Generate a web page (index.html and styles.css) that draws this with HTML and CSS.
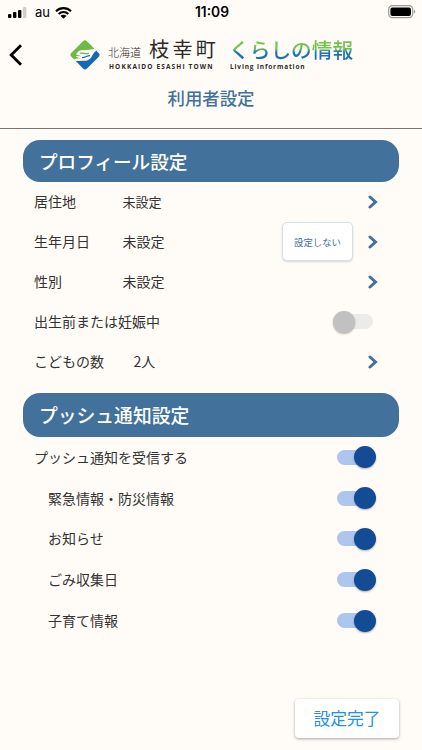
FILE: index.html
```html
<!DOCTYPE html>
<html lang="ja">
<head>
    <meta charset="UTF-8">
    <meta name="viewport" content="width=device-width, initial-scale=1.0">
    <title>利用者設定</title>
    <link rel="stylesheet" href="styles.css">
</head>
<body>
    <div class="status-bar">
        <div class="carrier">
            <svg width="19" height="11" viewBox="0 0 19 11">
                <rect x="0" y="7" width="3.4" height="4" rx="1"/>
                <rect x="5" y="5" width="3.4" height="6" rx="1"/>
                <rect x="10" y="3" width="3.4" height="8" rx="1"/>
                <rect x="15" y="0" width="3.4" height="11" rx="1" fill="#d0cecb"/>
            </svg>
            <span class="carrier-name">au</span>
            <svg width="17" height="13" viewBox="0 0 17 13">
                <path d="M1 5.2C5.2 1 11.8 1 16 5.2" fill="none" stroke="#000" stroke-width="2.2"/>
                <path d="M3.7 8C6.4 5.4 10.6 5.4 13.3 8" fill="none" stroke="#000" stroke-width="2.1"/>
                <path d="M8.5 12.7L5.5 9.7C7.2 8.3 9.8 8.3 11.5 9.7Z"/>
            </svg>
        </div>
        <div class="clock">11:09</div>
        <svg class="battery" width="28" height="14" viewBox="0 0 28 14">
            <rect x="0.7" y="0.7" width="24" height="12" rx="3.6" fill="none" stroke="#9b9997" stroke-width="1.2"/>
            <rect x="2.4" y="2.4" width="20.6" height="8.6" rx="2"/>
            <path d="M26 4.8C27.6 5.2 27.6 8.2 26 8.6Z" fill="#9b9997"/>
        </svg>
    </div>

    <header class="header">
        <svg class="back" width="14" height="22" viewBox="0 0 14 22">
            <path d="M12 1.2L2.2 11L12 20.8" fill="none" stroke="#000" stroke-width="2.8"/>
        </svg>
        <svg class="logo" width="30" height="30" viewBox="0 0 30 30">
            <path d="M13 1.2Q15 -0.6 17 1.2L25.5 9.7L14 16L5 20.3L1.2 16.5Q-0.4 15 1.2 13Z" fill="#6dbb45"/>
            <path d="M25.5 9.7L28.6 13Q30.6 15 28.6 17L17 28.6Q15 30.3 13 28.6L5 20.3L14 17Z" fill="#1769b5"/>
            <path d="M7 13C9.5 9.3 13 10.2 17 10C20 9.8 22 8.8 24.6 9L26.3 10.8C23.3 12.7 22.8 15.2 21.3 17.2C19.5 20 16.5 21 13 20.8C10 20.7 8 21.3 5.5 21L4 19.2C6.2 18.2 8.5 18.6 10.5 18.2L7.3 17.3C6 17 5.5 16.4 6.5 16.1L11.5 16.2L7 14.8C6 14.4 6 13.5 7 13Z" fill="#fffcf7"/>
            <path d="M10 13.2C13.5 12.5 15.5 14.2 19 13.3" fill="none" stroke="#6dbb45" stroke-width="1.3"/>
            <path d="M12 17.6C15 17.7 16.3 16 20 15.7" fill="none" stroke="#1769b5" stroke-width="1.3"/>
        </svg>
        <div class="town">
            <div class="town-name"><span class="pref">北海道</span><span class="city">枝幸町</span></div>
            <div class="town-en">HOKKAIDO ESASHI TOWN</div>
        </div>
        <div class="living">
            <div class="living-name">くらしの情報</div>
            <div class="living-en">Living information</div>
        </div>
    </header>

    <h1>利用者設定</h1>

    <main class="container">
        <h2>プロフィール設定</h2>
        <div class="profile">
            <div class="row">
                <span class="label">居住地</span>
                <span class="value small">未設定</span>
                <svg class="arrow" viewBox="0 0 10 14"><path d="M2 2L7.5 7L2 12"/></svg>
            </div>
            <div class="row">
                <span class="label">生年月日</span>
                <span class="value">未設定</span>
                <button class="unset">設定しない</button>
                <svg class="arrow" viewBox="0 0 10 14"><path d="M2 2L7.5 7L2 12"/></svg>
            </div>
            <div class="row">
                <span class="label">性別</span>
                <span class="value">未設定</span>
                <svg class="arrow" viewBox="0 0 10 14"><path d="M2 2L7.5 7L2 12"/></svg>
            </div>
            <div class="row">
                <span class="label wide">出生前または妊娠中</span>
                <span class="switch"></span>
            </div>
            <div class="row">
                <span class="label">こどもの数</span>
                <span class="value count">2人</span>
                <svg class="arrow" viewBox="0 0 10 14"><path d="M2 2L7.5 7L2 12"/></svg>
            </div>
        </div>

        <h2 class="push-title">プッシュ通知設定</h2>
        <div class="push">
            <div class="row">
                <span class="label wide">プッシュ通知を受信する</span>
                <span class="switch on"></span>
            </div>
            <div class="row sub">
                <span class="label wide">緊急情報・防災情報</span>
                <span class="switch on"></span>
            </div>
            <div class="row sub">
                <span class="label wide">お知らせ</span>
                <span class="switch on"></span>
            </div>
            <div class="row sub">
                <span class="label wide">ごみ収集日</span>
                <span class="switch on"></span>
            </div>
            <div class="row sub">
                <span class="label wide">子育て情報</span>
                <span class="switch on"></span>
            </div>
        </div>
    </main>

    <footer class="footer">
        <button class="done">設定完了</button>
    </footer>
</body>
</html>
```
FILE: styles.css
```css
* {
    box-sizing: border-box;
}

body {
    font-family: 'Noto Sans CJK JP', sans-serif;
    background-color: #fffcf7;
    color: #333;
    margin: 0;
    height: 750px;
    display: flex;
    flex-direction: column;
    overflow: hidden;
}

svg {
    display: block;
    flex-shrink: 0;
}

.status-bar {
    display: grid;
    grid-template-columns: 1fr auto 1fr;
    align-items: center;
    height: 24px;
    padding: 0 6px 0 8px;
    color: #000;
}

.carrier {
    display: flex;
    align-items: center;
}

.carrier-name {
    font: 13px/16px Inter, sans-serif;
    margin: 0 5px 0 8px;
}

.clock {
    font: 600 13.8px/24px Inter, sans-serif;
}

.battery {
    justify-self: end;
    margin-bottom: 1px;
}

.header {
    display: flex;
    align-items: flex-start;
    height: 59px;
    padding: 15px 0 0 9px;
}

.back {
    margin-top: 5px;
}

.logo {
    margin: 1px 0 0 47px;
}

.town {
    width: 107px;
    margin-left: 8px;
    color: #2d2928;
}

.town-name {
    display: flex;
    align-items: baseline;
    height: 24px;
    line-height: 20px;
    white-space: nowrap;
}

.pref {
    font-size: 11px;
    font-weight: 300;
    width: 41px;
}

.city {
    font-size: 20px;
    letter-spacing: 3.4px;
    width: 66px;
}

.town-en,
.living-en {
    font: bold 6.5px/8px 'Open Sans', sans-serif;
    white-space: nowrap;
}

.town-en {
    padding-left: 1px;
    letter-spacing: 1.15px;
}

.living {
    margin-left: 14px;
    color: #2d2928;
}

.living-name {
    height: 24px;
    font-size: 20.7px;
    font-weight: 500;
    line-height: 20px;
    color: transparent;
    background: linear-gradient(#72c34c 40%, #1b70bb 56%);
    background-clip: text;
    -webkit-background-clip: text;
}

.living-en {
    padding-left: 1px;
    letter-spacing: 0.85px;
}

h1 {
    height: 46px;
    margin: 0;
    border-bottom: 1px solid #777571;
    color: #42719c;
    font-size: 17.4px;
    font-weight: 500;
    line-height: 29px;
    text-align: center;
}

.container {
    padding: 10.5px 23px 0;
}

h2 {
    height: 42.5px;
    margin: 0;
    padding-left: 16px;
    border-radius: 17px;
    background-color: #42719c;
    color: #fff;
    font-size: 18.6px;
    font-weight: 500;
    line-height: 41px;
}

.push-title {
    height: 44px;
    font-size: 18.8px;
    line-height: 43px;
}

.profile {
    padding-bottom: 11.5px;
}

.row {
    display: flex;
    align-items: center;
    height: 39.9px;
    padding: 0 21px 0 11px;
    font-size: 14px;
}

.push .row {
    height: 40.8px;
}

.row.sub {
    padding-left: 25px;
}

.label,
.value {
    padding-bottom: 1px;
}

.label {
    width: 88.5px;
}

.label.wide {
    width: auto;
}

.value.small {
    font-size: 13px;
}

.value.count {
    padding-left: 11px;
}

.arrow {
    width: 10px;
    height: 14px;
    margin-left: auto;
}

.arrow path {
    fill: none;
    stroke: #42719c;
    stroke-width: 3;
    stroke-linecap: round;
}

.unset {
    width: 71px;
    height: 39px;
    margin-left: auto;
    padding: 0;
    border: 1px solid #d5e0ef;
    border-radius: 5px;
    background-color: #fff;
    box-shadow: 0 1px 2px rgba(0,0,0,0.15);
    color: #42719c;
    font-family: inherit;
    font-size: 9.4px;
}

.unset + .arrow {
    margin-left: 15px;
}

.switch {
    display: flex;
    align-items: center;
    width: 36px;
    height: 15px;
    margin: 0 5px 0 auto;
    border-radius: 8px;
    background-color: #ebebea;
}

.switch::before {
    content: '';
    flex-shrink: 0;
    width: 22px;
    height: 22px;
    margin-left: -4px;
    border-radius: 50%;
    background-color: #c1c1c1;
    box-shadow: 0 1px 2px rgba(0,0,0,0.3);
}

.switch.on {
    background-color: #adc6ed;
}

.switch.on::before {
    margin-left: 17px;
    background-color: #134b94;
}

.footer {
    display: flex;
    justify-content: flex-end;
    margin-top: auto;
    padding: 0 23px 12px;
}

.done {
    width: 104px;
    height: 39px;
    padding: 0 0 1px;
    border: none;
    border-radius: 4px;
    background-color: #fff;
    box-shadow: 0 1px 3px rgba(0,0,0,0.35);
    color: #2490e8;
    font-family: inherit;
    font-size: 16.8px;
}
```
